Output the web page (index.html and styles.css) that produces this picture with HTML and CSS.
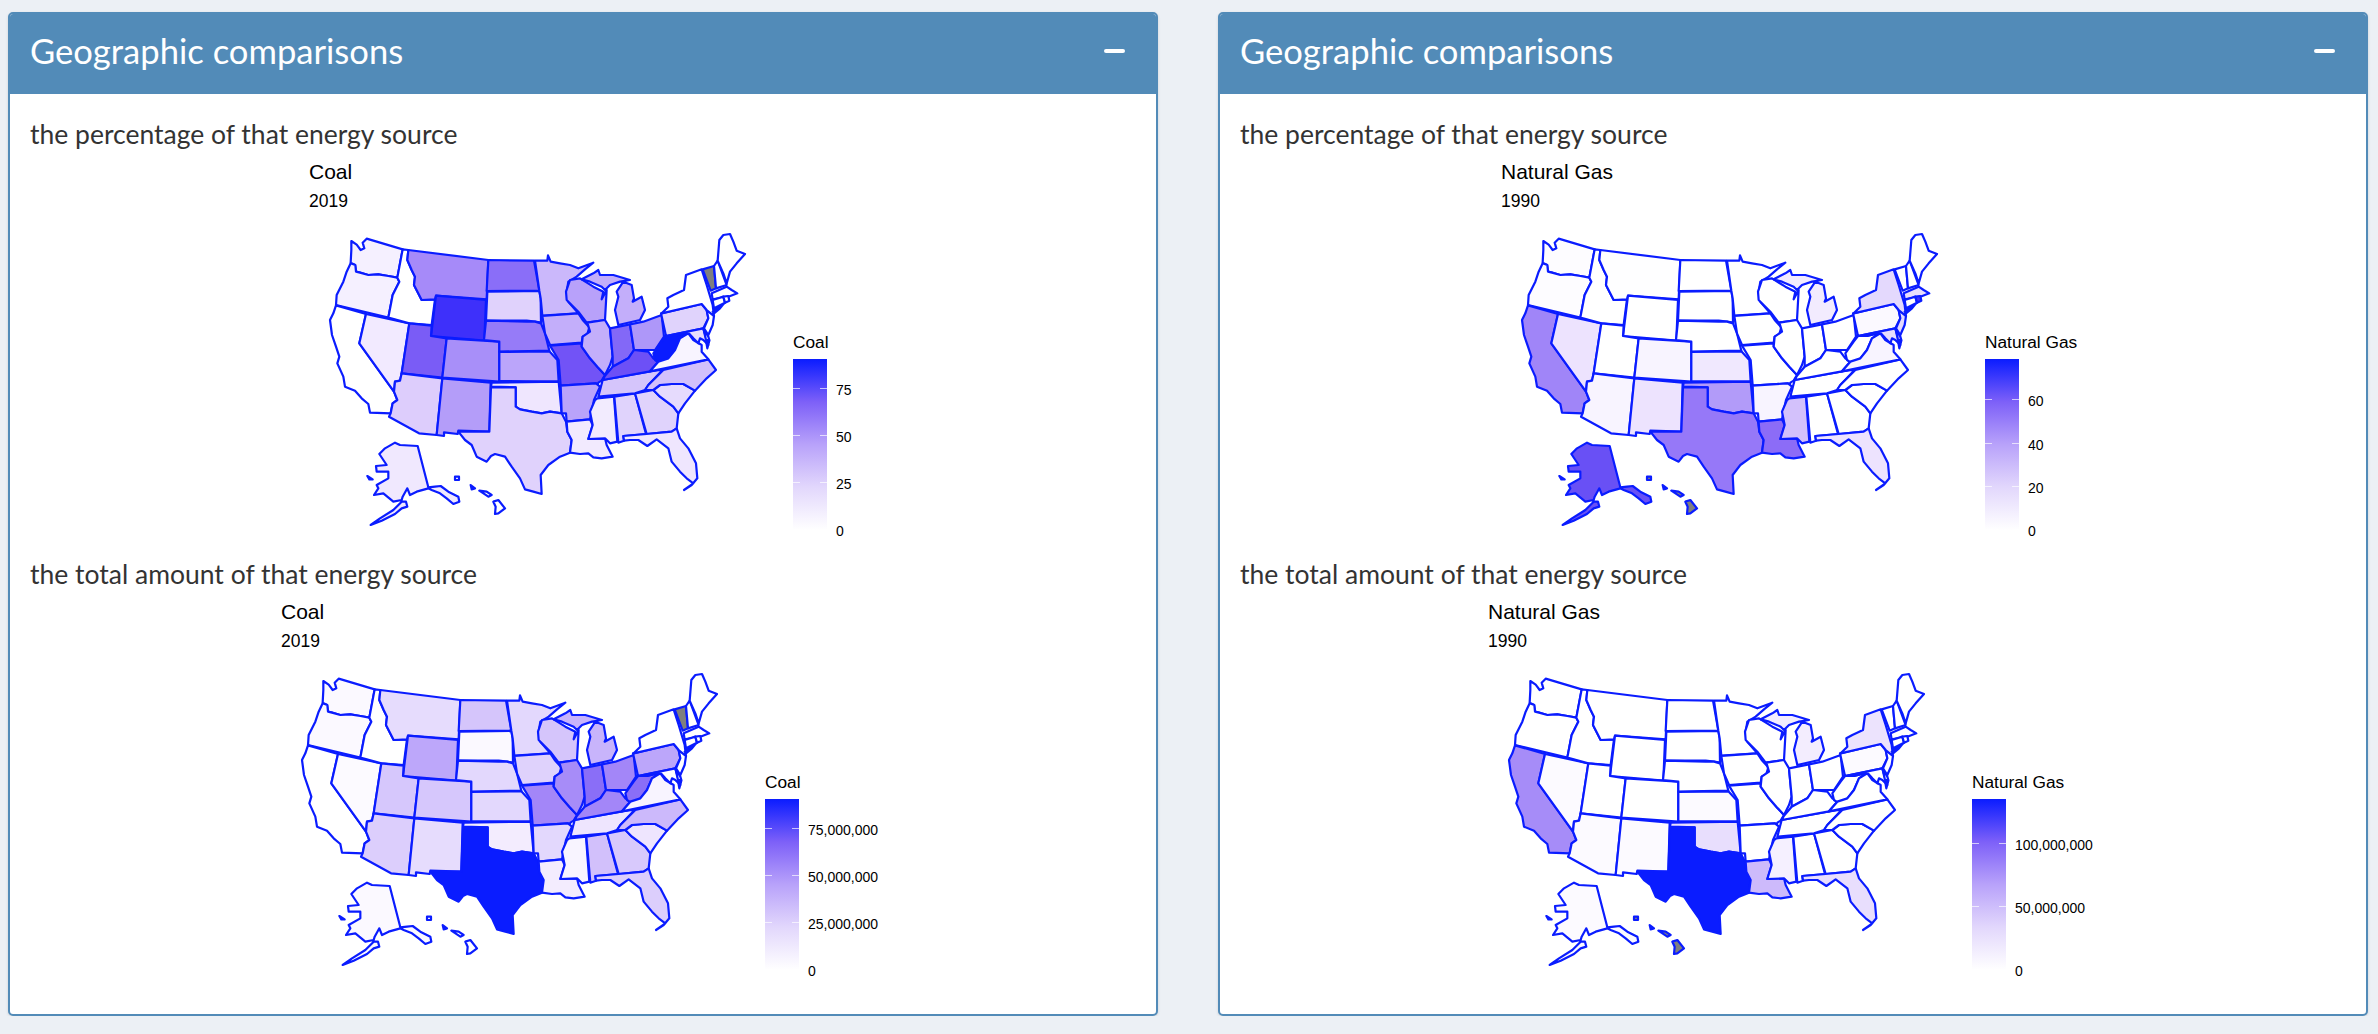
FILE: index.html
```html
<!DOCTYPE html>
<html lang="en">
<head>
  <meta charset="UTF-8">
  <title>Geographic comparisons</title>
  <link rel="stylesheet" href="styles.css">
</head>
<body>
  <!-- one state outline set, filled per plot through css variables -->
  <svg class="map-defs" xmlns="http://www.w3.org/2000/svg">
    <defs>
      <g id="usa">
        <path class="s-wa" d="M154 93L170 104L182 120L193 115L188 98L200 86L308 118L292 203L265 198L235 193L205 195L180 188L168 185L165 165L152 158L154 120Z"/>
        <path class="s-or" d="M152 160L166 165L168 185L180 188L205 195L235 193L265 198L292 203L298 215L278 255L265 323L108 285L110 255L130 215L140 185Z"/>
        <path class="s-ca" d="M108 286L198 312L178 400L282 545L292 570L278 580L272 610L210 608L205 582L185 565L165 542L135 530L130 500L112 460L118 440L108 410L96 375L90 330L100 310Z"/>
        <path class="s-nv" d="M198 312L328 340L305 490L300 512L285 515L282 545L178 400Z"/>
        <path class="s-id" d="M308 118L325 120L322 150L335 180L345 200L342 225L365 270L405 268L395 345L328 340L265 323L278 255L298 215L292 203Z"/>
        <path class="s-mt" d="M325 120L565 150L560 268L408 257L405 268L365 270L342 225L345 200L335 180L322 150Z"/>
        <path class="s-wy" d="M408 257L558 270L553 392L393 378Z"/>
        <path class="s-ut" d="M328 340L395 347L393 378L440 385L427 503L305 490Z"/>
        <path class="s-co" d="M440 385L598 395L598 515L427 503Z"/>
        <path class="s-az" d="M305 490L427 505L410 675L357 670L267 620L272 610L278 580L292 570L282 545L285 515L300 512Z"/>
        <path class="s-nm" d="M427 505L572 518L568 665L475 662L473 672L432 667L432 678L410 675Z"/>
        <path class="s-nd" d="M565 150L702 152L718 242L560 243Z"/>
        <path class="s-sd" d="M562 245L718 243L722 265L723 338L705 335L680 332L558 332Z"/>
        <path class="s-ne" d="M558 332L680 335L705 335L723 340L735 370L748 422L598 425L598 395L552 390Z"/>
        <path class="s-ks" d="M598 426L748 424L772 450L776 515L598 513Z"/>
        <path class="s-ok" d="M575 518L776 515L785 610L750 605L725 610L695 605L660 598L647 590L647 532L573 530Z"/>
        <path class="s-tx" d="M573 532L647 532L647 590L660 598L695 605L725 610L750 605L785 610L798 635L802 665L815 690L810 728L780 740L745 765L722 795L725 852L700 845L675 838L660 805L635 770L615 740L585 732L573 738L560 755L530 740L515 705L495 690L475 665L568 665Z"/>
        <path class="s-mn" d="M705 152L742 152L744 136L752 155L780 160L810 165L835 175L880 158L855 178L830 200L805 215L800 245L805 275L835 310L727 317L722 265L718 242Z"/>
        <path class="s-ia" d="M727 318L835 310L848 330L868 352L862 372L848 380L845 398L750 405L735 370Z"/>
        <path class="s-mo" d="M750 407L845 400L845 410L870 445L892 470L915 495L905 512L895 518L890 535L888 520L782 527L776 450Z"/>
        <path class="s-ar" d="M782 527L888 520L900 530L882 570L870 628L800 635L798 610L785 610Z"/>
        <path class="s-la" d="M800 635L870 628L878 645L865 687L915 685L920 705L938 740L905 745L880 742L865 730L840 732L810 728L815 690L802 665Z"/>
        <path class="s-ms" d="M892 565L942 560L952 695L930 700L915 685L865 687L878 645L870 605L885 570Z"/>
        <path class="s-al" d="M943 560L1005 550L1038 672L970 678L972 692L955 698Z"/>
        <path class="s-ga" d="M1005 550L1060 540L1080 560L1120 590L1135 610L1130 655L1115 665L1040 672Z"/>
        <path class="s-sc" d="M1060 540L1080 525L1115 522L1150 522L1185 542L1155 580L1135 610L1120 590L1080 560Z"/>
        <path class="s-fl" d="M970 678L1040 672L1115 665L1130 655L1140 685L1165 715L1188 760L1192 805L1175 825L1152 840L1180 820L1160 805L1140 785L1115 755L1105 715L1070 688L1042 708L1015 690L990 690L972 692Z"/>
        <path class="s-tn" d="M895 560L908 510L1050 484L1090 478L1045 525L1035 540L1005 550Z"/>
        <path class="s-nc" d="M1090 480L1225 448L1248 480L1220 505L1185 542L1150 522L1115 522L1080 525L1060 540L1035 540L1045 525Z"/>
        <path class="s-wi" d="M798 245L810 210L840 205L880 230L910 245L905 268L920 240L915 330L860 338L835 305L800 270Z"/>
        <path class="s-il" d="M862 338L915 330L930 355L938 440L930 465L915 495L892 470L870 445L845 410L848 380L870 365Z"/>
        <path class="s-mi" d="M955 345L945 300L955 260L950 245L970 215L995 225L1002 265L998 275L1025 260L1035 300L1020 330ZM845 208L880 190L895 180L900 195L940 195L990 210L960 215L930 225L915 240L905 230L870 215Z"/>
        <path class="s-in" d="M930 355L990 343L1002 420L985 445L938 470L938 440Z"/>
        <path class="s-oh" d="M990 343L1030 335L1085 315L1092 380L1065 420L1002 420Z"/>
        <path class="s-ky" d="M915 497L938 470L985 445L1002 420L1045 425L1060 445L1075 455L1050 484L908 510Z"/>
        <path class="s-wv" d="M1060 430L1085 395L1098 378L1125 378L1165 368L1140 385L1125 420L1105 445L1080 460L1065 450Z"/>
        <path class="s-va" d="M1050 484L1075 455L1105 445L1125 420L1140 385L1165 370L1180 390L1205 405L1205 425L1225 448ZM1218 392L1228 392L1222 415Z"/>
        <path class="s-pa" d="M1083 310L1205 282L1220 300L1225 325L1210 355L1098 378Z"/>
        <path class="s-md" d="M1098 378L1210 355L1220 390L1225 405L1210 390L1200 385L1195 400L1180 385L1165 368L1125 378Z"/>
        <path class="s-de" d="M1210 355L1225 380L1228 390L1218 390Z"/>
        <path class="s-nj" d="M1220 300L1242 318L1238 345L1225 375L1212 355L1225 325Z"/>
        <path class="s-ny" d="M1085 310L1105 290L1102 265L1120 255L1152 240L1158 195L1205 178L1220 225L1238 285L1242 318L1220 300L1205 282ZM1238 305L1280 270L1260 295L1242 310Z"/>
        <path class="s-vt" d="M1208 178L1242 168L1248 235L1232 242Z"/>
        <path class="s-nh" d="M1242 168L1253 152L1280 225L1248 235Z"/>
        <path class="s-me" d="M1253 152L1258 90L1270 75L1290 72L1300 95L1310 122L1335 132L1310 160L1290 185L1280 220L1270 190Z"/>
        <path class="s-ma" d="M1235 250L1280 230L1295 240L1312 250L1285 260L1238 268Z"/>
        <path class="s-ct" d="M1238 270L1270 260L1275 278L1242 295Z"/>
        <path class="s-ri" d="M1270 260L1285 258L1288 272L1275 278Z"/>
        <path class="s-ak" d="M285 698L300 705L353 708L385 832L405 830L422 828L445 845L475 860L478 875L460 882L440 865L420 850L395 840L385 835L350 845L330 855L322 835L308 860L305 870L280 875L250 850L222 855L235 835L230 825L265 805L265 785L230 785L228 768L260 765L238 732L255 715ZM305 875L280 900L240 925L212 945L245 932L285 912L305 895L322 890L318 875ZM202 798L218 808L208 808Z"/>
        <path class="s-hi" d="M465 800L477 800L477 810L465 810ZM512 825L525 835L515 838ZM538 842L560 845L575 855L565 860ZM580 875L595 870L615 895L595 910L585 912L587 890Z"/>
      </g>
    </defs>
  </svg>

  <div class="boxes">
    <section class="box">
      <header class="box-header">
        <h3 class="box-title">Geographic comparisons</h3>
        <button class="box-tool" type="button"><span class="minus"></span></button>
      </header>
      <div class="box-body">
        <h4 class="plot-label">the percentage of that energy source</h4>
        <div class="plot plot-a">
          <div class="plot-head">
            <div class="plot-title">Coal</div>
            <div class="plot-sub">2019</div>
          </div>
          <div class="plot-main">
            <svg class="map map-coal-pct" viewBox="0 0 1470 1020"><use href="#usa"/></svg>
            <div class="legend">
              <div class="legend-title">Coal</div>
              <div class="legend-bar">
                <div class="tick" style="bottom: 82.5%"><span class="tick-label">75</span></div>
                <div class="tick" style="bottom: 55%"><span class="tick-label">50</span></div>
                <div class="tick" style="bottom: 27.5%"><span class="tick-label">25</span></div>
                <div class="tick" style="bottom: 0%"><span class="tick-label">0</span></div>
              </div>
            </div>
          </div>
        </div>
        <h4 class="plot-label">the total amount of that energy source</h4>
        <div class="plot plot-b">
          <div class="plot-head">
            <div class="plot-title">Coal</div>
            <div class="plot-sub">2019</div>
          </div>
          <div class="plot-main">
            <svg class="map map-coal-total" viewBox="0 0 1470 1020"><use href="#usa"/></svg>
            <div class="legend">
              <div class="legend-title">Coal</div>
              <div class="legend-bar">
                <div class="tick" style="bottom: 82.5%"><span class="tick-label">75,000,000</span></div>
                <div class="tick" style="bottom: 55%"><span class="tick-label">50,000,000</span></div>
                <div class="tick" style="bottom: 27.5%"><span class="tick-label">25,000,000</span></div>
                <div class="tick" style="bottom: 0%"><span class="tick-label">0</span></div>
              </div>
            </div>
          </div>
        </div>
      </div>
    </section>

    <section class="box">
      <header class="box-header">
        <h3 class="box-title">Geographic comparisons</h3>
        <button class="box-tool" type="button"><span class="minus"></span></button>
      </header>
      <div class="box-body">
        <h4 class="plot-label">the percentage of that energy source</h4>
        <div class="plot plot-c">
          <div class="plot-head">
            <div class="plot-title">Natural Gas</div>
            <div class="plot-sub">1990</div>
          </div>
          <div class="plot-main">
            <svg class="map map-gas-pct" viewBox="0 0 1470 1020"><use href="#usa"/></svg>
            <div class="legend">
              <div class="legend-title">Natural Gas</div>
              <div class="legend-bar">
                <div class="tick" style="bottom: 76%"><span class="tick-label">60</span></div>
                <div class="tick" style="bottom: 50.5%"><span class="tick-label">40</span></div>
                <div class="tick" style="bottom: 25.3%"><span class="tick-label">20</span></div>
                <div class="tick" style="bottom: 0%"><span class="tick-label">0</span></div>
              </div>
            </div>
          </div>
        </div>
        <h4 class="plot-label">the total amount of that energy source</h4>
        <div class="plot plot-d">
          <div class="plot-head">
            <div class="plot-title">Natural Gas</div>
            <div class="plot-sub">1990</div>
          </div>
          <div class="plot-main">
            <svg class="map map-gas-total" viewBox="0 0 1470 1020"><use href="#usa"/></svg>
            <div class="legend">
              <div class="legend-title">Natural Gas</div>
              <div class="legend-bar">
                <div class="tick" style="bottom: 73.7%"><span class="tick-label">100,000,000</span></div>
                <div class="tick" style="bottom: 36.8%"><span class="tick-label">50,000,000</span></div>
                <div class="tick" style="bottom: 0%"><span class="tick-label">0</span></div>
              </div>
            </div>
          </div>
        </div>
      </div>
    </section>
  </div>
</body>
</html>
```
FILE: styles.css
```css
* {margin: 0; padding: 0; box-sizing: border-box;}
body {background-color: #ecf0f5; font-family: "Lato", "Noto Sans", sans-serif; color: #333;}

.boxes {display: grid; grid-template-columns: 1150px 1150px; column-gap: 60px; padding: 12px 0 0 8px;}
.box {height: 1004px; background-color: #fff; border: 2px solid #528bb8; border-radius: 5px; box-shadow: 0 1px 3px rgba(0,0,0,0.12); overflow: hidden;}
.box-header {height: 80px; background-color: #528bb8; color: #fff; display: flex; align-items: center; justify-content: space-between; padding: 0 20px 6px 20px;}
.box-title {font-size: 34.6px; font-weight: 400; line-height: 40px;}
.box-tool {background: none; border: none; padding: 0 11px 0 0; display: flex;}
.minus {display: block; width: 21px; height: 4px; background-color: #fff; border-radius: 2px;}
.box-body {padding: 20px 20px 0 20px;}

.plot-label {font-size: 26.5px; font-weight: 400; line-height: 40px; color: #333;}
.plot {height: 400px; font-family: "Liberation Sans", Arial, sans-serif; color: #000;}
.plot-a {padding-left: 270px;}
.plot-b {padding-left: 242px;}
.plot-c {padding-left: 252px;}
.plot-d {padding-left: 239px;}
.plot-head {height: 56px; margin-left: 9px; padding-top: 5px;}
.plot-title {font-size: 21px; line-height: 26px;}
.plot-sub {font-size: 17.5px; line-height: 18px; margin-top: 7px;}
.plot-main {display: flex; align-items: flex-start;}

.map-defs {display: none;}
.map {display: block; width: 490px; height: 340px; flex: none;}
#usa path {stroke: #0a1cff; stroke-width: 2.2px; stroke-linejoin: round; vector-effect: non-scaling-stroke;}

.legend {margin: 121px 0 0 3px;}
.legend-title {font-size: 17.3px; line-height: 22px; white-space: nowrap;}
.legend-bar {position: relative; width: 34px; height: 171px; margin-top: 6px; background: linear-gradient(to top, #fff 0%, #e2d7fc 25%, #b8a2fa 50%, #7d60f8 75%, #0a1cff 100%);}
.tick {position: absolute; left: 0; width: 34px; height: 1px; border-left: 7px solid #ffffffaa; border-right: 7px solid #ffffffaa;}
.tick-label {position: absolute; left: 36px; top: -8px; font-size: 14px; line-height: 20px; white-space: nowrap;}

/* state fills, white unless a plot sets the variable */
.s-wa {fill: var(--wa, #fff);} .s-or {fill: var(--or, #fff);} .s-ca {fill: var(--ca, #fff);} .s-nv {fill: var(--nv, #fff);}
.s-id {fill: var(--id, #fff);} .s-mt {fill: var(--mt, #fff);} .s-wy {fill: var(--wy, #fff);} .s-ut {fill: var(--ut, #fff);}
.s-co {fill: var(--co, #fff);} .s-az {fill: var(--az, #fff);} .s-nm {fill: var(--nm, #fff);} .s-nd {fill: var(--nd, #fff);}
.s-sd {fill: var(--sd, #fff);} .s-ne {fill: var(--ne, #fff);} .s-ks {fill: var(--ks, #fff);} .s-ok {fill: var(--ok, #fff);}
.s-tx {fill: var(--tx, #fff);} .s-mn {fill: var(--mn, #fff);} .s-ia {fill: var(--ia, #fff);} .s-mo {fill: var(--mo, #fff);}
.s-ar {fill: var(--ar, #fff);} .s-la {fill: var(--la, #fff);} .s-wi {fill: var(--wi, #fff);} .s-il {fill: var(--il, #fff);}
.s-mi {fill: var(--mi, #fff);} .s-in {fill: var(--in, #fff);} .s-oh {fill: var(--oh, #fff);} .s-ky {fill: var(--ky, #fff);}
.s-wv {fill: var(--wv, #fff);} .s-va {fill: var(--va, #fff);} .s-tn {fill: var(--tn, #fff);} .s-nc {fill: var(--nc, #fff);}
.s-sc {fill: var(--sc, #fff);} .s-ga {fill: var(--ga, #fff);} .s-al {fill: var(--al, #fff);} .s-ms {fill: var(--ms, #fff);}
.s-fl {fill: var(--fl, #fff);} .s-pa {fill: var(--pa, #fff);} .s-ny {fill: var(--ny, #fff);} .s-nj {fill: var(--nj, #fff);}
.s-md {fill: var(--md, #fff);} .s-de {fill: var(--de, #fff);} .s-vt {fill: var(--vt, #fff);} .s-nh {fill: var(--nh, #fff);}
.s-me {fill: var(--me, #fff);} .s-ma {fill: var(--ma, #fff);} .s-ct {fill: var(--ct, #fff);} .s-ri {fill: var(--ri, #fff);}
.s-ak {fill: var(--ak, #fff);} .s-hi {fill: var(--hi, #fff);}

.map-coal-pct {--wa: #f5f0ff; --or: #f5f0ff; --nv: #f2eaff; --mt: #a68af9; --wy: #3e30fa; --ut: #7a5cf6; --co: #a88ff9; --az: #ddcdfc; --nm: #b49df9; --nd: #8a6ef8; --sd: #e0d2fc; --ne: #967bf8; --ks: #bba5fa; --ok: #efe6fe; --tx: #e0d2fc; --mn: #cbb8fb; --ia: #c3aefa; --mo: #7253f6; --ar: #b9a3fa; --la: #f2eafe; --wi: #b8a1fa; --il: #c3aefa; --mi: #c3aefa; --in: #8368f7; --oh: #ae97f9; --ky: #6d50f6; --wv: #0a1cff; --va: #f8f4ff; --tn: #d5c5fb; --nc: #d2c0fb; --sc: #e6dbfd; --ga: #e0d3fc; --al: #e0d3fc; --ms: #f2ebfe; --fl: #efe6fe; --pa: #e0d3fc; --vt: #7f7f7f; --de: #f5f0ff; --md: #e8defd; --ak: #f0e8fe;}
.map-coal-total {--wa: #fbf9ff; --or: #fbf9ff; --nv: #fcfaff; --mt: #e6dcfd; --wy: #bda7fa; --ut: #d6c7fc; --co: #d6c7fc; --az: #dccefc; --nm: #e6dcfd; --nd: #d5c5fb; --sd: #fbf9ff; --ne: #e3d8fd; --ks: #e3d8fd; --ok: #f3ecfe; --tx: #0a1cff; --mn: #e3d8fd; --ia: #dfd2fc; --mo: #a386f8; --ar: #e3d8fd; --la: #f3ecfe; --wi: #d5c5fb; --il: #a78cf8; --mi: #c8b4fb; --in: #8a6ef7; --oh: #a386f8; --ky: #a386f8; --wv: #8a6ef7; --pa: #bca6fa; --va: #f8f4ff; --tn: #eee5fe; --nc: #ccb9fb; --sc: #eee5fe; --ga: #d8c9fc; --al: #d2c0fb; --ms: #f8f4ff; --fl: #dccefc; --ak: #fbf9ff; --vt: #7f7f7f;}
.map-gas-pct {--wa: #fdfcff; --or: #fdfcff; --ca: #a085f8; --nv: #ede3fe; --mt: #fefeff; --az: #f8f4ff; --nm: #ede3fe; --co: #f8f4ff; --ks: #f0e8fe; --ok: #b29bf9; --tx: #9678f8; --la: #8c6cf7; --ms: #d3c1fb; --ar: #f8f4ff; --mi: #f2ebfe; --ny: #e4d9fd; --pa: #fbf9ff; --va: #f8f4ff; --fl: #ede3fe; --ma: #e8defd; --ri: #4030f9; --nj: #e4d9fd; --de: #c8b4fb; --md: #e8defd; --ak: #6950f5; --hi: #7f7f7f;}
.map-gas-total {--ca: #a68cf8; --nv: #fcfaff; --az: #fcfaff; --nm: #fcfaff; --ks: #fcfaff; --ok: #e8defd; --tx: #0a1cff; --la: #cdbafb; --ms: #f5f0ff; --mi: #f3edfe; --ny: #ece3fd; --pa: #fcfaff; --fl: #e8defd; --ak: #fcfaff; --hi: #7f7f7f;}
```
